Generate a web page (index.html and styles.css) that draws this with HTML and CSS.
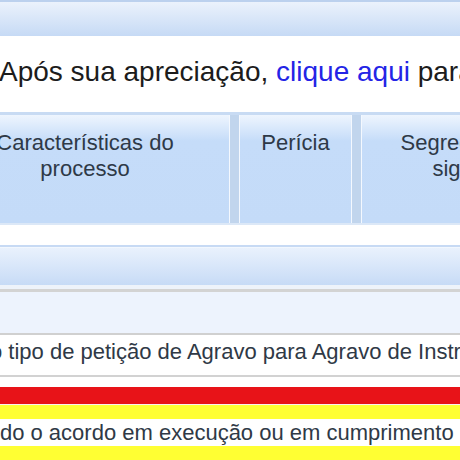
FILE: index.html
```html
<!DOCTYPE html>
<html lang="pt-BR">
<head>
<meta charset="utf-8">
<title>Autuação</title>
<link rel="stylesheet" href="styles.css">
</head>
<body>
<div class="page">
  <div class="topbar"></div>
  <div class="notice">Após sua apreciação, <a class="link" href="#">clique aqui</a> para prosseguir com a autuação</div>
  <div class="tabs">
    <div class="tab tab-first">Características do processo</div>
    <div class="tab tab-second">Perícia</div>
    <div class="tab tab-third">Segredo de sigilo</div>
  </div>
  <div class="spacer"></div>
  <div class="bar"></div>
  <div class="band-gap"></div>
  <div class="light-row"></div>
  <div class="text-row"><span class="shift-a">o tipo de petição de Agravo para Agravo de Instrumento</span></div>
  <div class="gap-row"></div>
  <div class="red-bar"></div>
  <div class="yellow-bar"></div>
  <div class="warn-row"><span class="shift-b">quando o acordo em execução ou em cumprimento de sentença</span></div>
  <div class="yellow-bar yellow-last"></div>
</div>
</body>
</html>
```

FILE: styles.css
```css
html, body {
  margin: 0;
  padding: 0;
  background: #ffffff;
}

body {
  font-family: "Liberation Sans", Arial, sans-serif;
  overflow: hidden;
  width: 460px;
  height: 460px;
}

.page {
  display: flex;
  flex-direction: column;
  width: 460px;
  overflow: hidden;
}

.topbar {
  height: 34px;
  border-top: 2px solid #bcd1ee;
  background: linear-gradient(#ebf2fc, #c6daf5);
}

.notice {
  height: 76px;
  box-sizing: border-box;
  padding-top: 20px;
  margin-left: -1px;
  font-size: 28px;
  line-height: 32px;
  color: #1c1c1c;
  white-space: nowrap;
}

.link {
  color: #2424e6;
  text-decoration: none;
}

.tabs {
  display: flex;
  gap: 9px;
  margin-left: -60px;
  width: 700px;
  border-top: 3px solid #c8dbf3;
  border-bottom: 2px solid #dce8f7;
  background: #c1d5ed;
}

.tab {
  box-sizing: border-box;
  height: 108px;
  padding: 15px 12px 0;
  border-left: 1px solid #f4f8fe;
  border-right: 1px solid #f4f8fe;
  background: linear-gradient(#eef5fe 0px, #c5dcf9 26px, #c4dbf8 100%);
  font-size: 22px;
  line-height: 26px;
  text-align: center;
  color: #2e3947;
}

.tab-first {
  width: 290px;
}

.tab-second {
  width: 113px;
}

.tab-third {
  width: 193px;
  padding-left: 20px;
  padding-right: 20px;
}

.spacer {
  height: 20px;
}

.bar {
  height: 38px;
  border-top: 2px solid #c7daf4;
  box-shadow: inset 0 1px 0 #f2f7fe;
  background: linear-gradient(#eaf2fd, #c7dbf6);
}

.band-gap {
  height: 4px;
  background: #eef3fa;
  border-bottom: 3px solid #d3d3d3;
}

.light-row {
  height: 41px;
  background: #edf3fd;
  border-bottom: 2px solid #d0d0d0;
}

.text-row {
  height: 42px;
  box-sizing: border-box;
  font-size: 22px;
  line-height: 34px;
  color: #2f3946;
  white-space: nowrap;
  border-bottom: 2px solid #d2d2d2;
}

.shift-a {
  margin-left: -10px;
}

.gap-row {
  height: 10px;
}

.red-bar {
  height: 17px;
  background: #e81318;
  border-bottom: 1px solid #fbf3f0;
}

.yellow-bar {
  height: 14px;
  background: #ffff33;
}

.warn-row {
  height: 27px;
  font-size: 22px;
  line-height: 27px;
  color: #2f3946;
  white-space: nowrap;
  background:
    radial-gradient(circle at 150px 470px, rgba(255,255,255,0) 92px, rgba(248,215,215,0.45) 96px, rgba(248,215,215,0.45) 104px, rgba(255,255,255,0) 108px),
    #ffffff;
}

.shift-b {
  margin-left: -49px;
}

.yellow-last {
  height: 20px;
}
```
